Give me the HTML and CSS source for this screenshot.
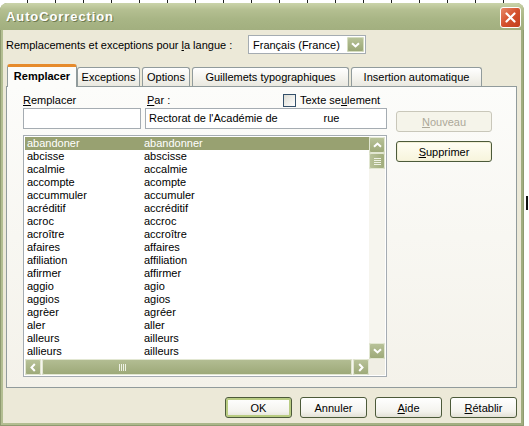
FILE: index.html
```html
<!DOCTYPE html>
<html lang="fr">
<head>
    <meta charset="UTF-8">
    <title>AutoCorrection</title>
    <link rel="stylesheet" href="styles.css">
</head>
<body>
    <div class="ruler"></div>
    <div class="screen">
        <div class="window">
            <!-- barre de titre -->
            <div class="titlebar">
                <span class="title">AutoCorrection</span>
                <span class="close">
                    <svg width="11" height="11" viewBox="0 0 11 11"><path d="M1.5 1.5 L9.5 9.5 M9.5 1.5 L1.5 9.5" stroke="#fff" stroke-width="2.2" stroke-linecap="round"/></svg>
                </span>
            </div>

            <div class="client">
                <!-- langue -->
                <div class="lang-row">
                    <span class="lang-label">Remplacements et exceptions pour <u>l</u>a langue :</span>
                    <div class="select">
                        <span>Français (France)</span>
                        <span class="drop">
                            <svg width="9" height="6" viewBox="0 0 9 6"><path d="M1 1.2 L4.5 4.5 L8 1.2" stroke="#fff" stroke-width="2" fill="none"/></svg>
                        </span>
                    </div>
                </div>

                <!-- onglets -->
                <div class="tabs">
                    <div class="tab active t-remplacer">Remplacer</div>
                    <div class="tab t-exceptions">Exceptions</div>
                    <div class="tab t-options">Options</div>
                    <div class="tab t-guillemets">Guillemets typographiques</div>
                    <div class="tab t-insertion">Insertion automatique</div>
                </div>

                <div class="panel">
                    <div class="left">
                        <div class="labels">
                            <span class="lbl-remplacer"><u>R</u>emplacer</span>
                            <span class="lbl-par"><u>P</u>ar :</span>
                            <span class="checkbox"></span>
                            <span>Texte se<u>u</u>lement</span>
                        </div>
                        <div class="inputs">
                            <div class="field small"></div>
                            <div class="field wide">Rectorat de l'Académie de               rue</div>
                        </div>

                        <div class="list">
                            <div class="rows">
                                <div class="row selected"><span>abandoner</span><span>abandonner</span></div>
                                <div class="row"><span>abcisse</span><span>abscisse</span></div>
                                <div class="row"><span>acalmie</span><span>accalmie</span></div>
                                <div class="row"><span>accompte</span><span>acompte</span></div>
                                <div class="row"><span>accummuler</span><span>accumuler</span></div>
                                <div class="row"><span>acréditif</span><span>accréditif</span></div>
                                <div class="row"><span>acroc</span><span>accroc</span></div>
                                <div class="row"><span>acroître</span><span>accroître</span></div>
                                <div class="row"><span>afaires</span><span>affaires</span></div>
                                <div class="row"><span>afiliation</span><span>affiliation</span></div>
                                <div class="row"><span>afirmer</span><span>affirmer</span></div>
                                <div class="row"><span>aggio</span><span>agio</span></div>
                                <div class="row"><span>aggios</span><span>agios</span></div>
                                <div class="row"><span>agrèer</span><span>agréer</span></div>
                                <div class="row"><span>aler</span><span>aller</span></div>
                                <div class="row"><span>alleurs</span><span>ailleurs</span></div>
                                <div class="row"><span>allieurs</span><span>ailleurs</span></div>
                            </div>

                            <!-- barre verticale -->
                            <div class="vscroll">
                                <span class="sbtn"><svg width="9" height="6" viewBox="0 0 9 6"><path d="M1 4.8 L4.5 1.5 L8 4.8" stroke="#fff" stroke-width="2" fill="none"/></svg></span>
                                <span class="vthumb"><i></i><i></i><i></i><i></i></span>
                                <span class="vtrack"></span>
                                <span class="sbtn"><svg width="9" height="6" viewBox="0 0 9 6"><path d="M1 1.2 L4.5 4.5 L8 1.2" stroke="#fff" stroke-width="2" fill="none"/></svg></span>
                            </div>

                            <!-- barre horizontale -->
                            <div class="hscroll">
                                <span class="sbtn"><svg width="6" height="9" viewBox="0 0 6 9"><path d="M4.8 1 L1.5 4.5 L4.8 8" stroke="#fff" stroke-width="2" fill="none"/></svg></span>
                                <span class="hthumb"><i></i><i></i><i></i><i></i></span>
                                <span class="sbtn"><svg width="6" height="9" viewBox="0 0 6 9"><path d="M1.2 1 L4.5 4.5 L1.2 8" stroke="#fff" stroke-width="2" fill="none"/></svg></span>
                            </div>
                            <div class="corner"></div>
                        </div>
                    </div>

                    <div class="right">
                        <button class="btn disabled"><u>N</u>ouveau</button>
                        <button class="btn focus"><u>S</u>upprimer</button>
                    </div>
                </div>

                <div class="actions">
                    <button class="btn default">OK</button>
                    <button class="btn">Annuler</button>
                    <button class="btn"><u>A</u>ide</button>
                    <button class="btn"><u>R</u>établir</button>
                </div>
            </div>
        </div>
        <div class="side">
            <span class="mark"></span>
        </div>
    </div>
</body>
</html>
```

FILE: styles.css
```css
:root {
    --face: #ECE9D8;
    --border: #919B9C;
    --field: #A5ACB2;
}
body {
    margin: 0;
    width: 529px;
    height: 426px;
    overflow: hidden;
    background: #fff;
    font-family: "Liberation Sans", Arial, sans-serif;
    font-size: 11px;
    color: #000;
}
u {
    text-decoration: underline;
    text-underline-offset: 1px;
}
.ruler {
    height: 3px;
    background: repeating-linear-gradient(to right, #fff 0 27px, #222 27px 28px);
}
.screen {
    display: flex;
    height: 423px;
}
.side {
    flex: 1;
    display: flex;
    flex-direction: column;
    padding-top: 193px;
}
.mark {
    width: 2px;
    height: 14px;
    background: #111;
    margin-left: 2px;
}

/* fenêtre */
.window {
    width: 524px;
    height: 423px;
    box-sizing: border-box;
    padding: 0 3px 3px 3px;
    border-radius: 8px 8px 0 0;
    background: linear-gradient(to right, #B3BE92, #A9B589 50%, #A1AD80);
    box-shadow: inset 0 0 0 1px #8E9A70;
    display: flex;
    flex-direction: column;
}
.titlebar {
    height: 27px;
    display: flex;
    align-items: center;
    justify-content: space-between;
    border-radius: 7px 7px 0 0;
    margin: 0 -3px;
    padding-left: 6px;
    padding-right: 3px;
    background: linear-gradient(#CBD4AA, #B4BF91 25%, #A8B585 60%, #A2AF7F);
}
.title {
    color: #fff;
    font-weight: bold;
    font-size: 13px;
    letter-spacing: 0.9px;
    text-shadow: 1px 1px 0 #6E7A50;
}
.close {
    width: 19px;
    height: 19px;
    border: 1px solid #fff;
    border-radius: 3px;
    background: linear-gradient(135deg, #E88A6B, #D4502C 50%, #C23F1E);
    display: flex;
    align-items: center;
    justify-content: center;
    margin-top: 2px;
}
.client {
    flex: 1;
    background: var(--face);
    padding: 0 3px 0 3px;
    display: flex;
    flex-direction: column;
}

/* langue */
.lang-row {
    display: flex;
    align-items: center;
    margin-top: 5px;
    height: 19px;
}
.lang-label {
    width: 242px;
}
.select {
    width: 118px;
    height: 19px;
    box-sizing: border-box;
    border: 1px solid var(--field);
    background: #fff;
    display: flex;
    align-items: center;
    justify-content: space-between;
    padding: 1px 1px 1px 4px;
}
.drop {
    width: 17px;
    height: 15px;
    border-radius: 2px;
    background: linear-gradient(#B9C49A, #98A573);
    box-shadow: inset 0 0 0 1px #D6DDC0;
    display: flex;
    align-items: center;
    justify-content: center;
}

/* onglets */
.tabs {
    display: flex;
    align-items: flex-end;
    margin: 10px 0 -1px 1px;
    height: 23px;
    position: relative;
    z-index: 1;
}
.tab {
    height: 19px;
    box-sizing: border-box;
    border: 1px solid var(--border);
    border-bottom: none;
    border-radius: 3px 3px 0 0;
    background: linear-gradient(#FFFFFF, #F3F2EC 60%, #E9E8E0);
    display: flex;
    align-items: center;
    justify-content: center;
    margin-bottom: 1px;
}
.tab.active {
    height: 23px;
    margin-bottom: 0;
    font-weight: bold;
    background: #FCFCFA;
    border-top: 3px solid #E68B2C;
    padding-bottom: 2px;
}
.t-remplacer { width: 70px; }
.t-exceptions { width: 63px; }
.t-options { width: 48px; margin-left: 2px; }
.t-guillemets { width: 157px; margin-left: 2px; }
.t-insertion { width: 131px; margin-left: 2px; }

/* page */
.panel {
    width: 511px;
    height: 302px;
    box-sizing: border-box;
    border: 1px solid var(--border);
    background: linear-gradient(#FCFCFA, #F4F2EA);
    padding: 6px 0 0 16px;
    display: flex;
}
.left {
    width: 364px;
}
.labels {
    height: 14px;
    display: flex;
    align-items: center;
}
.lbl-remplacer { width: 124px; }
.lbl-par { width: 136px; }
.checkbox {
    width: 11px;
    height: 11px;
    border: 1px solid #34506A;
    background: linear-gradient(135deg, #DCDCD4, #FFFFFF);
    margin-right: 4px;
}
.inputs {
    display: flex;
    gap: 4px;
    margin-top: 1px;
}
.field {
    height: 21px;
    box-sizing: border-box;
    border: 1px solid var(--field);
    background: #fff;
    padding: 3px 0 0 3px;
    white-space: pre;
}
.field.small { width: 118px; }
.field.wide { flex: 1; }

/* liste */
.list {
    margin-top: 6px;
    height: 242px;
    box-sizing: border-box;
    border: 1px solid var(--field);
    background: #fff;
    padding: 1px;
    display: grid;
    grid-template-columns: 1fr 16px;
    grid-template-rows: 1fr 16px;
}
.rows {
    overflow: hidden;
}
.row {
    height: 13px;
    line-height: 13px;
    display: flex;
    padding-left: 2px;
}
.row span:first-child {
    width: 117px;
}
.row.selected {
    background: #98A171;
    color: #fff;
}
.vscroll {
    display: flex;
    flex-direction: column;
    background: #F6F5EE;
}
.hscroll {
    display: flex;
    background: #F6F5EE;
}
.corner {
    background: #F0EEE4;
}
.sbtn {
    width: 16px;
    height: 16px;
    flex: none;
    box-sizing: border-box;
    border-radius: 2px;
    background: linear-gradient(#B9C39A, #9CA877);
    box-shadow: inset 0 0 0 1px #E2E7D2;
    display: flex;
    align-items: center;
    justify-content: center;
}
.vthumb {
    height: 16px;
    border-radius: 2px;
    background: linear-gradient(to right, #B9C39A, #9FAB7A);
    box-shadow: inset 0 0 0 1px #E2E7D2;
    display: flex;
    flex-direction: column;
    align-items: center;
    justify-content: center;
    gap: 1px;
}
.vthumb i {
    width: 7px;
    height: 1px;
    background: #EEF1E4;
}
.vtrack { flex: 1; }
.hthumb {
    flex: 1;
    margin: 0 1px;
    border-radius: 2px;
    background: linear-gradient(#B4BE94, #9CA877);
    box-shadow: inset 0 0 0 1px #E2E7D2;
    display: flex;
    align-items: center;
    gap: 1px;
    padding-left: 77px;
}
.hthumb i {
    width: 1px;
    height: 7px;
    background: #EEF1E4;
}

/* boutons */
.right {
    margin-left: 9px;
    padding-top: 18px;
    display: flex;
    flex-direction: column;
    gap: 9px;
}
.btn {
    width: 96px;
    height: 21px;
    box-sizing: border-box;
    border: 1px solid #4C5A3A;
    border-radius: 3px;
    background: linear-gradient(#FFFFFF, #F4F3EE 70%, #E3E1D6);
    font-family: inherit;
    font-size: 11px;
    color: #000;
    padding: 0;
}
.btn.disabled {
    border-color: #C9C7BA;
    color: #ACA899;
    background: #F5F4EA;
}
.btn.focus {
    background: linear-gradient(#FFFEF4, #F7F4DC);
    box-shadow: inset 0 0 0 1px #F2EFD4;
}
.btn.default {
    box-shadow: inset 0 0 0 2px #B9CC82;
}
.actions {
    display: flex;
    justify-content: flex-end;
    gap: 8px;
    margin-top: 9px;
    padding-right: 1px;
}
.actions .btn {
    width: 67px;
}
```
